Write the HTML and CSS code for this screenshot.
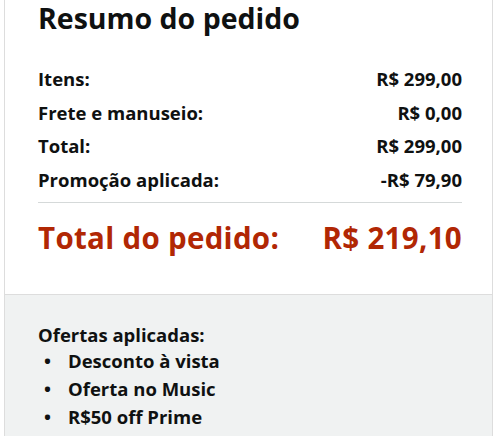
FILE: index.html
```html
<!DOCTYPE html>
<html lang="pt-BR">
<head>
<meta charset="utf-8">
<link rel="stylesheet" href="styles.css">
</head>
<body>
<div class="card">
  <section class="summary">
    <h1 class="title">Resumo do pedido</h1>
    <div class="rows">
      <div class="row"><span>Itens:</span><span>R$ 299,00</span></div>
      <div class="row"><span>Frete e manuseio:</span><span>R$ 0,00</span></div>
      <div class="row"><span>Total:</span><span>R$ 299,00</span></div>
      <div class="row"><span>Promoção aplicada:</span><span>-R$ 79,90</span></div>
    </div>
    <div class="grand"><span>Total do pedido:</span><span>R$ 219,10</span></div>
  </section>
  <section class="offers">
    <div class="offers-title">Ofertas aplicadas:</div>
    <ul class="offer-list">
      <li>Desconto à vista</li>
      <li>Oferta no Music</li>
      <li>R$50 off Prime</li>
    </ul>
  </section>
</div>
</body>
</html>
```
FILE: styles.css
```css
html, body {
  margin: 0;
  padding: 0;
  background: #ffffff;
  overflow: hidden;
}
body {
  font-family: "Open Sans", "Liberation Sans", sans-serif;
  color: #0f1111;
}
.card {
  margin-left: 4px;
  width: 487px;
  border-left: 1px solid #dddddd;
  border-right: 1px solid #dddddd;
  height: 100vh;
  display: flex;
  flex-direction: column;
}
.summary {
  padding: 0 30px 0 33px;
  height: 294px;
  box-sizing: border-box;
}
.title {
  margin: 0;
  font-size: 28.5px;
  line-height: 36px;
  font-weight: 700;
}
.rows {
  margin-top: 26px;
  padding-bottom: 6px;
  border-bottom: 1px solid #d5d9d9;
}
.row {
  display: flex;
  justify-content: space-between;
  font-size: 18.5px;
  line-height: 33.5px;
  font-weight: 700;
}
.grand {
  display: flex;
  justify-content: space-between;
  font-size: 29.5px;
  letter-spacing: 0.3px;
  line-height: 40px;
  font-weight: 700;
  color: #b12704;
  margin-top: 15px;
}
.offers {
  flex: 1;
  background: #f0f2f2;
  border-top: 1px solid #dddddd;
  padding: 26px 33px 0;
  font-size: 18.5px;
  font-weight: 700;
}
.offers-title {
  line-height: 28px;
  margin-bottom: -2px;
}
.offer-list {
  margin: 0;
  padding: 0;
  list-style: none;
  line-height: 28px;
}
.offer-list li {
  display: flex;
}
.offer-list li::before {
  content: "•";
  width: 30px;
  padding-left: 6px;
  box-sizing: border-box;
}
```
